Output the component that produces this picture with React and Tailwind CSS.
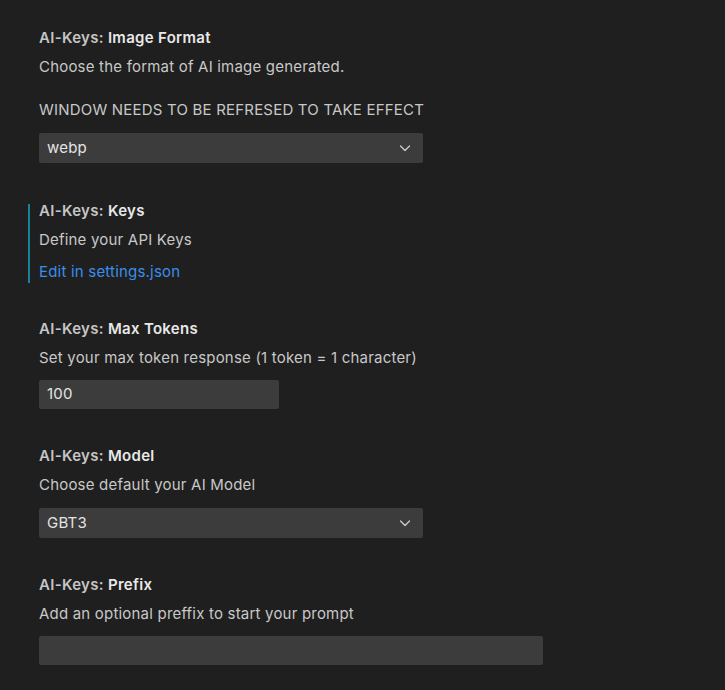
import React from "react";

const font = { fontFamily: 'Inter, "Noto Sans", "Liberation Sans", sans-serif' };

function Chevron() {
  return (
    <svg width="16" height="16" viewBox="0 0 16 16" fill="none" className="text-[#cccccc]">
      <path d="M3.5 6 L8 10.5 L12.5 6" stroke="currentColor" strokeWidth="1.3" strokeLinecap="round" strokeLinejoin="round" />
    </svg>
  );
}

function Title({ name }) {
  return (
    <div className="h-[18px] leading-[18px] text-[15px] tracking-[0.3px]">
      <span className="font-semibold text-[#c5c5c5]">AI-Keys: </span>
      <span className="font-semibold text-[#e8e8e8]">{name}</span>
    </div>
  );
}

function Desc({ children }) {
  return <div className="mt-[11px] h-[18px] whitespace-nowrap leading-[18px] text-[15px] tracking-[0.2px] text-[#c8c8c8]">{children}</div>;
}

function Select({ value }) {
  return (
    <div className="mt-[14px] flex h-[30px] w-[384px] items-center justify-between rounded-[2px] bg-[#3c3c3c] pl-[8px] pr-[10px] text-[15px] tracking-[0.2px] text-[#e4e4e4]">
      <span>{value}</span>
      <Chevron />
    </div>
  );
}

function Input({ value, width }) {
  return (
    <div className={`mt-[13px] flex h-[29px] items-center rounded-[2px] bg-[#3c3c3c] pl-[8px] text-[15px] tracking-[0.2px] text-[#e4e4e4] ${width}`}>
      {value}
    </div>
  );
}

export default function App() {
  return (
    <div className="h-[690px] w-[725px] overflow-hidden bg-[#1f1f1f] pl-[28px]" style={font}>
      {/* Image Format */}
      <div className="border-l-2 border-transparent pl-[9px] pt-[29px]">
        <Title name="Image Format" />
        <Desc>Choose the format of AI image generated.</Desc>
        <div className="mt-[25px] h-[18px] whitespace-nowrap leading-[18px] text-[15px] tracking-[0.2px] text-[#c8c8c8]">WINDOW NEEDS TO BE REFRESED TO TAKE EFFECT</div>
        <Select value="webp" />
      </div>

      {/* Keys */}
      <div className="mt-[41px] border-l-2 border-[#1a7f98] pl-[9px]">
        <div className="relative -top-[2px]">
          <Title name="Keys" />
          <Desc>Define your API Keys</Desc>
          <div className="mt-[14px] h-[18px] leading-[18px] text-[15px] tracking-[0.2px] text-[#3b8eea]">Edit in settings.json</div>
        </div>
      </div>

      {/* Max Tokens */}
      <div className="border-l-2 border-transparent pl-[9px] pt-[37px]">
        <Title name="Max Tokens" />
        <Desc>Set your max token response (1 token = 1 character)</Desc>
        <Input value="100" width="w-[240px]" />
      </div>

      {/* Model */}
      <div className="border-l-2 border-transparent pl-[9px] pt-[38px]">
        <Title name="Model" />
        <Desc>Choose default your AI Model</Desc>
        <Select value="GBT3" />
      </div>

      {/* Prefix */}
      <div className="border-l-2 border-transparent pl-[9px] pt-[38px]">
        <Title name="Prefix" />
        <Desc>Add an optional preffix to start your prompt</Desc>
        <Input value="" width="w-[504px]" />
      </div>
    </div>
  );
}
